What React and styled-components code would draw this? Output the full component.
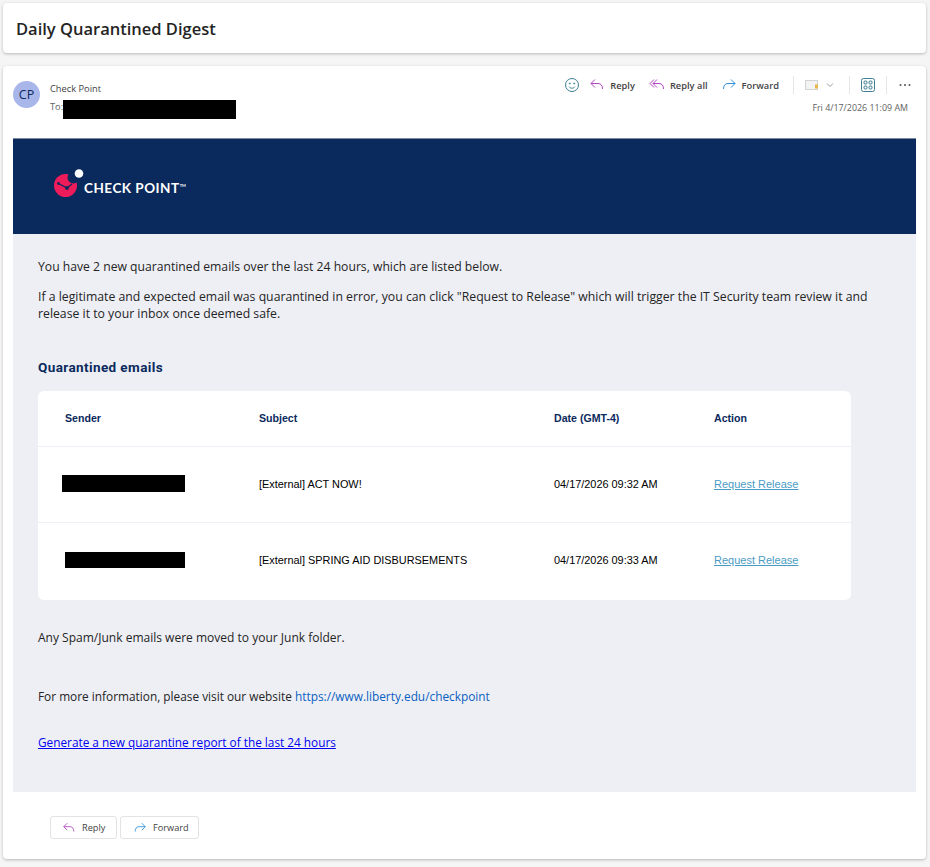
import React from 'react';
import styled, { createGlobalStyle } from 'styled-components';

const GlobalStyle = createGlobalStyle`
    html, body {
        margin: 0;
        padding: 0;
        background: #f5f5f5;
        font-family: "Open Sans", "Noto Sans", sans-serif;
    }
`;

const Page = styled.div`
    width: 930px;
    height: 867px;
    padding: 3px 4px 0 3px;
    box-sizing: border-box;
    overflow: hidden;
`;

const SubjectBar = styled.div`
    height: 50px;
    background: #fff;
    border-radius: 4px;
    box-shadow: 0 1px 3px rgba(0, 0, 0, 0.25);
    display: flex;
    align-items: center;
    padding: 0 13px;
    margin-bottom: 13px;
`;

const SubjectTitle = styled.h1`
    margin: 0;
    font-size: 16.5px;
    font-weight: 600;
    color: #242424;
`;

const MailCard = styled.div`
    height: 793px;
    background: #fff;
    border-radius: 4px;
    box-shadow: 0 1px 3px rgba(0, 0, 0, 0.25);
    padding: 0 10px;
    box-sizing: border-box;
`;

const MailHeader = styled.div`
    height: 72px;
    display: flex;
    justify-content: space-between;
`;

const Sender = styled.div`
    display: flex;
    padding-top: 15px;
`;

const Avatar = styled.div`
    width: 27px;
    height: 27px;
    border-radius: 50%;
    background: #a9b6ea;
    color: #0b2a5e;
    font-size: 12.5px;
    display: flex;
    align-items: center;
    justify-content: center;
    margin-right: 10px;
`;

const SenderName = styled.div`
    font-size: 9.3px;
    line-height: 14px;
    color: #424242;
    margin-top: 1px;
`;

const ToRow = styled.div`
    display: flex;
    align-items: flex-start;
    font-size: 9.3px;
    line-height: 14px;
    color: #616161;
    height: 19px;
    margin-top: 4px;
`;

const Redacted = styled.div`
    background: #000;
    width: ${props => props.$width}px;
    height: ${props => props.$height}px;
    margin-left: ${props => props.$left || 0}px;
`;

const Actions = styled.div`
    display: flex;
    flex-direction: column;
    align-items: flex-end;
    padding: 9px 8px 0 0;
`;

const Toolbar = styled.div`
    display: flex;
    align-items: center;
    height: 20px;
    margin-right: -3px;
`;

const ToolButton = styled.div`
    display: flex;
    align-items: center;
    font-size: 9.3px;
    font-weight: 600;
    color: #424242;
    margin-left: ${props => props.$left || 0}px;

    svg {
        margin-right: 5px;
    }
`;

const ToolIcon = styled.svg`
    display: block;
    margin-left: ${props => props.$left || 0}px;
`;

const Separator = styled.div`
    width: 1px;
    height: 18px;
    background: #e6e6e6;
    margin-left: ${props => props.$left}px;
`;

const MailDate = styled.div`
    font-size: 8.9px;
    color: #616161;
    margin-top: 7px;
    line-height: 12px;
`;

const Banner = styled.div`
    height: 96px;
    background: #0a295c;
    border-top: 1px solid #7d8aa3;
    box-sizing: border-box;
    display: flex;
    align-items: center;
    padding: 0 0 0 41px;
`;

const LogoMark = styled.svg`
    margin-bottom: 3px;
`;

const LogoText = styled.span`
    color: #fff;
    font-family: "Lato", sans-serif;
    font-size: 13.5px;
    font-weight: 700;
    letter-spacing: 0.5px;
    margin-top: 3px;
`;

const LogoTm = styled.span`
    font-size: 4px;
    vertical-align: 6px;
    letter-spacing: 0;
`;

const Body = styled.div`
    background: #eeeff5;
    height: 558px;
    padding: 24px 0 0 25px;
    box-sizing: border-box;
`;

const Paragraph = styled.p`
    margin: 0 0 ${props => props.$bottom || 0}px;
    font-size: ${props => props.$size || 12}px;
    line-height: 17px;
    color: #242424;
    width: 845px;
`;

const SectionTitle = styled.h2`
    margin: 37px 0 15px;
    font-family: "Roboto", "Liberation Sans", sans-serif;
    font-size: 13.5px;
    line-height: 17px;
    font-weight: 700;
    color: #0a295c;
    letter-spacing: 0.4px;
`;

const DigestCard = styled.div`
    width: 813px;
    height: 209px;
    background: #fff;
    border-radius: 6px;
    margin-bottom: 29px;
`;

const Row = styled.div`
    display: grid;
    grid-template-columns: 221px 295px 160px 1fr;
    height: ${props => props.$height}px;
    padding-bottom: ${props => props.$lift || 0}px;
    align-items: center;
    border-bottom: ${props => (props.$divider ? '1px solid #eeeff5' : 'none')};
    box-sizing: border-box;
    font-family: "Liberation Sans", Arial, sans-serif;
    font-size: 10.9px;
    color: #000;
`;

const HeadCell = styled.div`
    font-weight: 700;
    font-size: 10.6px;
    color: #0a295c;
    padding-left: ${props => props.$left || 0}px;
`;

const Cell = styled.div`
    padding-left: ${props => props.$left || 0}px;
`;

const ReleaseLink = styled.a`
    color: #4a9bc4;
    text-decoration: underline;
    font-size: 11px;
`;

const InfoLink = styled.a`
    color: #0a5fc0;
    text-decoration: none;
`;

const ReportLink = styled.a`
    color: #0000ee;
    text-decoration: underline;
`;

const FooterActions = styled.div`
    display: flex;
    gap: 3px;
    padding: 24px 0 0 37px;
`;

const FooterButton = styled.div`
    height: 23px;
    box-sizing: border-box;
    width: ${props => props.$width}px;
    border: 1px solid #e3e3e3;
    border-radius: 3px;
    display: flex;
    align-items: center;
    padding-left: ${props => props.$pad}px;
    font-size: 9.2px;
    color: #424242;

    svg {
        margin-right: 6px;
    }
`;

const ReplyIcon = ({ size = 16 }) => (
    <svg width={size} height={size} viewBox="0 0 16 16" fill="none" stroke="#b146c2" strokeWidth="1">
        <path d="M6 2.5 2 6.5l4 4M2 6.5h7c3 0 4.5 2 4.5 5.5" />
    </svg>
);

const ReplyAllIcon = ({ size = 16 }) => (
    <svg width={size} height={size} viewBox="0 0 16 16" fill="none" stroke="#b146c2" strokeWidth="1">
        <path d="M5 2.5 1 6.5l4 4M8 2.5 4 6.5l4 4M4 6.5h6c3 0 4.5 2 4.5 5.5" />
    </svg>
);

const ForwardIcon = ({ size = 16 }) => (
    <svg width={size} height={size} viewBox="0 0 16 16" fill="none" stroke="#2e8fdc" strokeWidth="1">
        <path d="M10 2.5l4 4-4 4M14 6.5H7c-3 0-4.5 2-4.5 5.5" />
    </svg>
);

const CheckPointMark = () => (
    <LogoMark width="30" height="32" viewBox="0 0 30 32">
        <circle cx="11.5" cy="16.5" r="11.5" fill="#ee1c5b" />
        <circle cx="19.5" cy="8.5" r="6" fill="#0a295c" />
        <circle cx="25" cy="4.5" r="4.3" fill="#fff" />
        <path d="M4.5 14.5l8.5 4.5 5-4" stroke="#0a295c" strokeWidth="1.2" fill="none" />
        <circle cx="4.5" cy="14.5" r="1.4" fill="#0a295c" />
        <circle cx="13" cy="19" r="1.9" fill="#0a295c" />
    </LogoMark>
);

const rows = [
    { id: 1, bar: 123, barLeft: 24, barHeight: 17, lift: 2, subject: '[External] ACT NOW!', date: '04/17/2026 09:32 AM' },
    { id: 2, bar: 120, barLeft: 27, barHeight: 16, lift: 4, subject: '[External] SPRING AID DISBURSEMENTS', date: '04/17/2026 09:33 AM' },
];

const App = () => (
    <>
        <GlobalStyle />
        <Page>
            <SubjectBar>
                <SubjectTitle>Daily Quarantined Digest</SubjectTitle>
            </SubjectBar>
            <MailCard>
                <MailHeader>
                    <Sender>
                        <Avatar>CP</Avatar>
                        <div>
                            <SenderName>Check Point</SenderName>
                            <ToRow>
                                To:
                                <Redacted $width={173} $height={19} />
                            </ToRow>
                        </div>
                    </Sender>
                    <Actions>
                        <Toolbar>
                            <ToolIcon width="16" height="16" viewBox="0 0 16 16" fill="none" stroke="#3f7f94">
                                <circle cx="8" cy="8" r="6.5" />
                                <circle cx="5.8" cy="6.5" r="0.5" fill="#3f7f94" />
                                <circle cx="10.2" cy="6.5" r="0.5" fill="#3f7f94" />
                                <path d="M5 9.7c1.5 2 4.5 2 6 0" />
                            </ToolIcon>
                            <ToolButton $left={9}><ReplyIcon />Reply</ToolButton>
                            <ToolButton $left={14}><ReplyAllIcon />Reply all</ToolButton>
                            <ToolButton $left={13}><ForwardIcon />Forward</ToolButton>
                            <Separator $left={14} />
                            <ToolIcon $left={11} width="32" height="14" viewBox="0 0 32 14" fill="none">
                                <rect x="0.5" y="2.5" width="12" height="9" fill="#f3f3f3" stroke="#d4d4d4" />
                                <rect x="10" y="6.5" width="3" height="4" fill="#e8b64c" />
                                <path d="M22 5.5l3 3 3-3" stroke="#9a9a9a" />
                            </ToolIcon>
                            <Separator $left={12} />
                            <ToolIcon $left={11} width="14" height="14" viewBox="0 0 14 14" fill="none" stroke="#3f7f94">
                                <rect x="0.5" y="0.5" width="13" height="13" rx="2" />
                                <rect x="3" y="3" width="3" height="3" rx="1" />
                                <rect x="8" y="3" width="3" height="3" rx="1" />
                                <rect x="3" y="8" width="3" height="3" rx="1" />
                                <rect x="8" y="8" width="3" height="3" rx="1" />
                            </ToolIcon>
                            <Separator $left={11} />
                            <ToolIcon $left={12} width="12" height="4" viewBox="0 0 12 4" fill="#555">
                                <circle cx="1.5" cy="2" r="1" />
                                <circle cx="6" cy="2" r="1" />
                                <circle cx="10.5" cy="2" r="1" />
                            </ToolIcon>
                        </Toolbar>
                        <MailDate>Fri 4/17/2026 11:09 AM</MailDate>
                    </Actions>
                </MailHeader>
                <Banner>
                    <CheckPointMark />
                    <LogoText>CHECK POINT<LogoTm>TM</LogoTm></LogoText>
                </Banner>
                <Body>
                    <Paragraph $bottom={13} $size={12.18}>
                        You have 2 new quarantined emails over the last 24 hours, which are listed below.
                    </Paragraph>
                    <Paragraph $size={12.26}>
                        If a legitimate and expected email was quarantined in error, you can click "Request to Release" which will trigger the IT Security team review it and release it to your inbox once deemed safe.
                    </Paragraph>
                    <SectionTitle>Quarantined emails</SectionTitle>
                    <DigestCard>
                        <Row $height={56} $lift={2} $divider>
                            <HeadCell $left={27}>Sender</HeadCell>
                            <HeadCell>Subject</HeadCell>
                            <HeadCell>Date (GMT-4)</HeadCell>
                            <HeadCell>Action</HeadCell>
                        </Row>
                        {rows.map((row, i) => (
                            <Row key={row.id} $height={i === 0 ? 76 : 77} $lift={row.lift} $divider={i === 0}>
                                <Cell><Redacted $width={row.bar} $height={row.barHeight} $left={row.barLeft} /></Cell>
                                <Cell>{row.subject}</Cell>
                                <Cell>{row.date}</Cell>
                                <Cell><ReleaseLink href="#">Request Release</ReleaseLink></Cell>
                            </Row>
                        ))}
                    </DigestCard>
                    <Paragraph $bottom={42} $size={12.03}>Any Spam/Junk emails were moved to your Junk folder.</Paragraph>
                    <Paragraph $bottom={29} $size={11.85}>
                        For more information, please visit our website <InfoLink href="#">https://www.liberty.edu/checkpoint</InfoLink>
                    </Paragraph>
                    <Paragraph $size={11.8}>
                        <ReportLink href="#">Generate a new quarantine report of the last 24 hours</ReportLink>
                    </Paragraph>
                </Body>
                <FooterActions>
                    <FooterButton $width={67} $pad={11}><ReplyIcon size={14} />Reply</FooterButton>
                    <FooterButton $width={79} $pad={12}><ForwardIcon size={14} />Forward</FooterButton>
                </FooterActions>
            </MailCard>
        </Page>
    </>
);

export default App;
